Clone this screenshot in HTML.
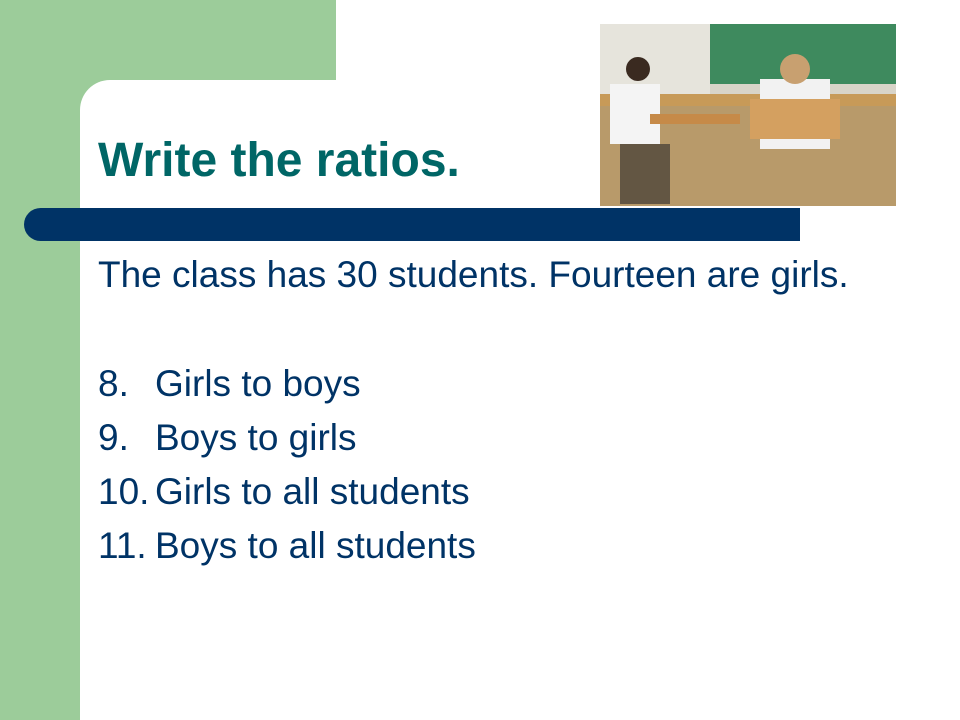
<!DOCTYPE html>
<html><head><style>
body{margin:0;width:960px;height:720px;position:relative;background:#fff;font-family:"Liberation Sans",Arial,sans-serif;overflow:hidden}
.g1{position:absolute;left:0;top:0;width:80px;height:720px;background:#9ccc9a}
.g2{position:absolute;left:0;top:0;width:336px;height:80px;background:#9ccc9a}
.g3{position:absolute;left:80px;top:80px;width:40px;height:40px;background:#9ccc9a}
.w{position:absolute;left:80px;top:80px;width:120px;height:120px;background:#fff;border-top-left-radius:30px}
.bar{position:absolute;left:24px;top:208px;width:776px;height:33px;background:#003366;border-radius:17px 0 0 17px}
h1{position:absolute;left:98px;top:134px;margin:0;font-size:48px;line-height:54px;font-weight:bold;color:#006666}
.t{position:absolute;left:98px;color:#003366;font-size:37px;line-height:41px;white-space:nowrap;width:600px;height:41px}
.n{position:absolute;left:0}
.x{position:absolute;left:57px}
</style></head><body>
<div class="g1"></div><div class="g2"></div><div class="g3"></div><div class="w"></div>
<svg style="position:absolute;left:600px;top:24px" width="296" height="182" viewBox="0 0 296 182">
<rect width="296" height="182" fill="#d8d4c8"/>
<rect x="110" y="0" width="186" height="60" fill="#3e8a5e"/>
<rect x="0" y="0" width="110" height="70" fill="#e6e4dc"/>
<rect x="0" y="75" width="296" height="107" fill="#b89a6a"/>
<rect x="0" y="70" width="296" height="12" fill="#c79a58"/>
<rect x="10" y="60" width="50" height="60" fill="#f4f4f4"/>
<circle cx="38" cy="45" r="12" fill="#3a2a20"/>
<rect x="160" y="55" width="70" height="70" fill="#f2f2f2"/>
<circle cx="195" cy="45" r="15" fill="#c8a070"/>
<rect x="50" y="90" width="90" height="10" fill="#c68a48"/>
<rect x="150" y="75" width="90" height="40" fill="#d4a060"/>
<rect x="20" y="120" width="50" height="60" fill="#2a2a2a" opacity=".6"/>
</svg>
<h1>Write the ratios.</h1>
<div class="t" style="top:254px;width:800px">The class has 30 students. Fourteen are girls.</div>
<div class="t" style="top:363px"><span class="n">8.</span><span class="x">Girls to boys</span></div>
<div class="t" style="top:417px"><span class="n">9.</span><span class="x">Boys to girls</span></div>
<div class="t" style="top:471px"><span class="n">10.</span><span class="x">Girls to all students</span></div>
<div class="t" style="top:525px"><span class="n">11.</span><span class="x">Boys to all students</span></div>
<div class="bar"></div>
</body></html>
